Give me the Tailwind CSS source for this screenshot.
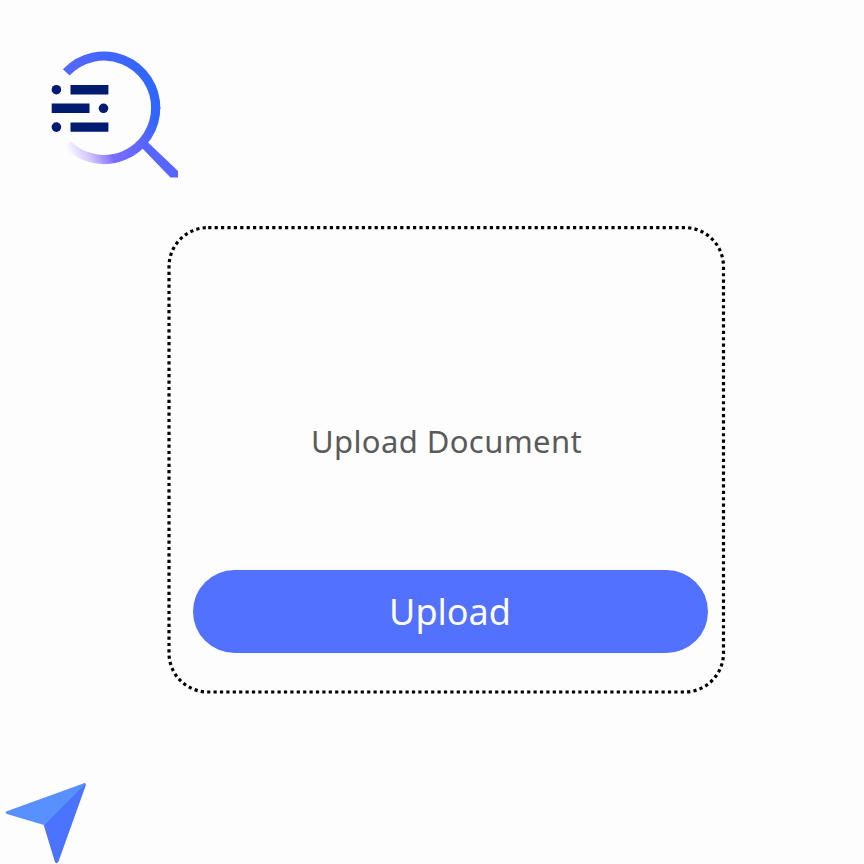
<!DOCTYPE html>
<html lang="en">
<head>
<meta charset="utf-8">
<title>Upload Document</title>
<script src="https://cdn.jsdelivr.net/npm/@tailwindcss/browser@4"></script>
</head>
<body class="bg-[#fdfdfd]">
<div class="relative w-[864px] h-[864px] overflow-hidden flex flex-col font-['Noto_Sans','Open_Sans',sans-serif]">
  <header class="h-[224px] shrink-0 pl-[40px] pt-[40px]">
    <svg class="w-[150px] h-[150px]" viewBox="40 40 150 150" fill="none" aria-hidden="true">
      <defs>
        <linearGradient id="ring" gradientUnits="userSpaceOnUse" x1="66" y1="0" x2="150" y2="0">
          <stop offset="0" stop-color="#5468ff"/><stop offset="1" stop-color="#3066ff"/>
        </linearGradient>
        <linearGradient id="tail" gradientUnits="userSpaceOnUse" x1="66" y1="148" x2="151" y2="110">
          <stop offset="0" stop-color="#8a6cff" stop-opacity="0"/><stop offset=".2" stop-color="#8a6cff" stop-opacity=".4"/><stop offset=".42" stop-color="#786bff"/><stop offset=".8" stop-color="#5966ff"/><stop offset="1" stop-color="#3066ff"/>
        </linearGradient>
      </defs>
      <path d="M66.3 72.4A51.7 51.7 0 0 1 155.7 109" stroke="url(#ring)" stroke-width="9.2"/>
      <path d="M155.7 107A51.7 51.7 0 0 1 67.6 144.5" stroke="url(#tail)" stroke-width="9.2"/>
      <path d="M140.5 146.5L146.5 141L178 171V177.5H170.5Z" fill="#5865ff"/>
      <g fill="#001b70">
        <circle cx="56.4" cy="89.7" r="4.8"/><path d="M70.5 85H108.4V94.4H70.5Z"/>
        <path d="M51.7 103.6H89.5V113H51.7Z"/><circle cx="103.5" cy="108.3" r="4.8"/>
        <circle cx="56.4" cy="127.1" r="4.8"/><path d="M70.5 122.4H108.4V131.8H70.5Z"/>
      </g>
    </svg>
  </header>
  <main class="relative ml-[166px] w-[560px] h-[471px] shrink-0 flex flex-col items-center">
    <svg class="absolute inset-0 w-[560px] h-[471px]" viewBox="166 224 560 471" fill="none" aria-hidden="true">
      <path d="M208.2 227.6H684.5A39 39 0 0 1 723.5 266.6V653A39 39 0 0 1 684.5 692H208A39 39 0 0 1 169 653V266.6A39 39 0 0 1 208 227.6Z" stroke="#000" stroke-width="3.2" stroke-dasharray="3.2 3.2"/>
    </svg>
    <h1 class="mt-[192px] ml-[1px] h-[50px] leading-[50px] text-[31px] tracking-[0.4px] text-[#5a5a5a] whitespace-nowrap">Upload Document</h1>
    <button class="mt-[103.5px] ml-[8px] w-[515px] h-[83px] rounded-full bg-[#5271ff] text-[#fdfdfd] text-[36px] leading-[83px] whitespace-nowrap">Upload</button>
  </main>
  <svg class="absolute left-0 top-[770px] w-[100px] h-[94px]" viewBox="0 770 100 94" aria-hidden="true">
    <path d="M84 783.2Q86.5 783 85.7 785.5L58.5 861.5Q56.5 865 54.8 861.5L43.7 825Z" fill="#4b73ff"/>
    <path d="M84 783.2L85.5 784L44 825L6.8 814Q4.5 812.3 6.8 811.2Z" fill="#5990ff"/>
  </svg>
</div>
</body>
</html>
